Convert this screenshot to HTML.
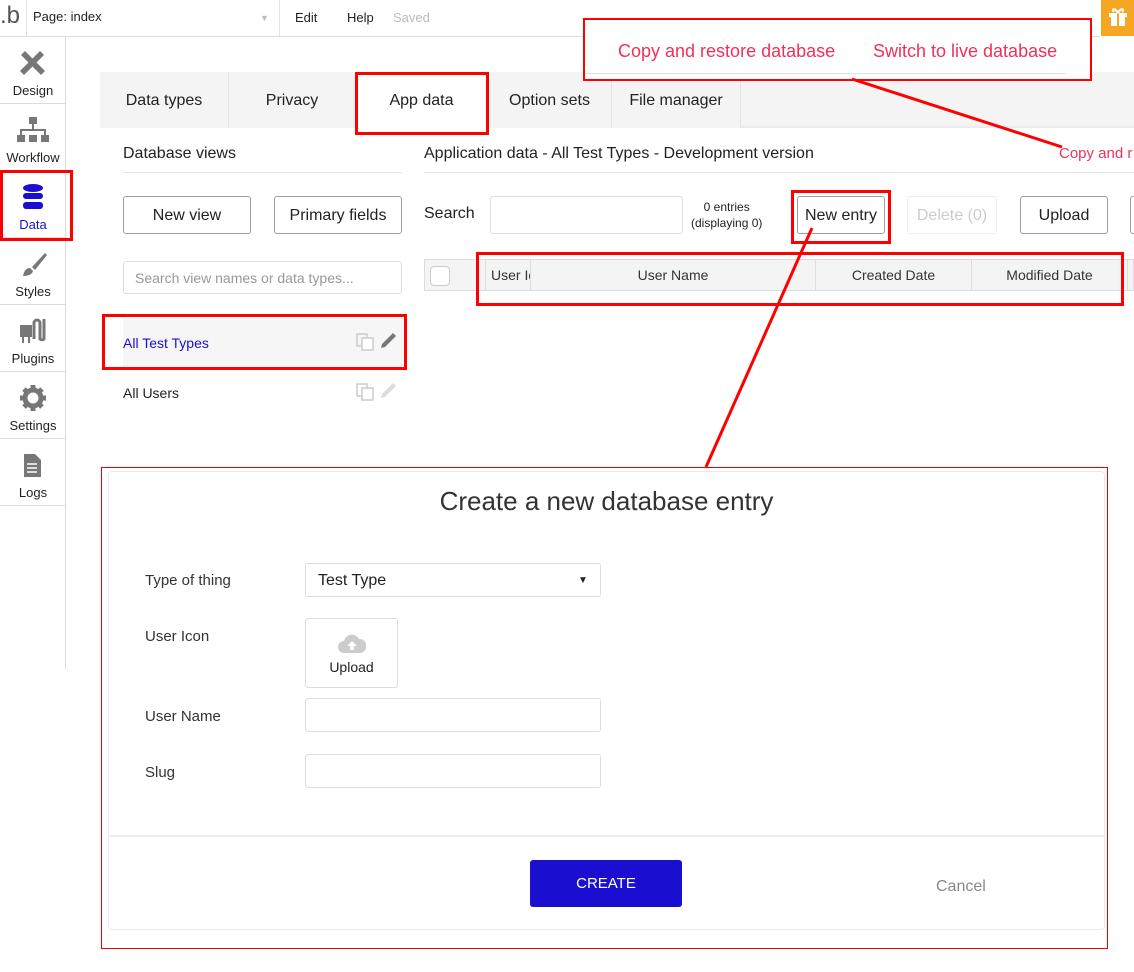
<!DOCTYPE html>
<html><head><style>
*{box-sizing:border-box;margin:0;padding:0}
body{width:1134px;height:970px;overflow:hidden;background:#fff;font-family:"Liberation Sans",sans-serif;color:#222;position:relative;font-size:15px}
.a{position:absolute}
.t{position:absolute;white-space:nowrap}
.btn{position:absolute;border:1px solid #9aa0a6;border-radius:3px;background:#fff;text-align:center;font-size:16px}
.red{position:absolute;border:3px solid #f00}
.side .t{font-size:13px;width:66px;text-align:center;left:0}
.sep{position:absolute;left:0;width:65px;height:1px;background:#ddd}
.tab{position:absolute;top:72px;height:56px;background:#f4f4f4;border-right:1px solid #e4e4e4;font-size:16px;text-align:center;line-height:58px}
.inp{position:absolute;border:1px solid #ddd;border-radius:3px;background:#fff}
.lbl{position:absolute;font-size:15px;color:#333}
.th{position:absolute;top:260px;height:30px;border-left:1px solid #ddd;font-size:14px;text-align:center;line-height:31px;color:#333}
</style></head><body>
<div class="a" style="left:0;top:36px;width:1100px;height:1px;background:#ddd"></div>
<div class="a" style="left:26px;top:0;width:1px;height:36px;background:#e4e4e4"></div>
<div class="t" style="left:0;top:2px;font-size:24px;color:#555">.b</div>
<div class="t" style="left:33px;top:9px;font-size:13px">Page: index</div>
<div class="t" style="left:260px;top:13px;font-size:9px;color:#bbb">▼</div>
<div class="a" style="left:279px;top:0;width:1px;height:36px;background:#e4e4e4"></div>
<div class="t" style="left:295px;top:10px;font-size:13px">Edit</div>
<div class="t" style="left:347px;top:10px;font-size:13px">Help</div>
<div class="t" style="left:393px;top:10px;font-size:13px;color:#bbb">Saved</div>
<div class="a" style="left:1101px;top:0;width:33px;height:36px;background:#f5a623"></div>
<svg class="a" style="left:1106px;top:4px" width="24" height="24" viewBox="0 0 24 24"><rect x="3" y="9" width="18" height="4" fill="#fff"/><rect x="5" y="13" width="14" height="9" fill="#fff"/><rect x="11" y="9" width="2" height="13" fill="#f5a623"/><path d="M12 9C9 3 5 5 8 8M12 9c3-6 7-4 4-1" stroke="#fff" stroke-width="2" fill="none"/></svg>
<div class="a side" style="left:0;top:37px;width:66px;height:632px;border-right:1px solid #ddd">
<svg class="a" style="left:18px;top:12px" width="28" height="28" viewBox="0 0 28 28"><path d="M3 6l4-4 20 20-4 4z" fill="#777"/><path d="M22 2l4 4L6 26l-4-4z" fill="#777"/></svg>
<div class="t" style="top:46px">Design</div>
<div class="sep" style="top:66px"></div>
<svg class="a" style="left:17px;top:79px" width="32" height="28" viewBox="0 0 32 28"><rect x="12" y="1" width="8" height="7" fill="#777"/><rect x="15" y="8" width="2" height="6" fill="#777"/><rect x="3" y="13" width="26" height="2" fill="#777"/><rect x="3" y="13" width="2" height="7" fill="#777"/><rect x="27" y="13" width="2" height="7" fill="#777"/><rect x="0" y="19" width="8" height="7" fill="#777"/><rect x="12" y="19" width="8" height="7" fill="#777"/><rect x="24" y="19" width="8" height="7" fill="#777"/></svg>
<div class="t" style="top:113px">Workflow</div>
<div class="sep" style="top:133px"></div>
<svg class="a" style="left:22px;top:147px" width="22" height="26" viewBox="0 0 22 26"><ellipse cx="11" cy="4" rx="10" ry="4" fill="#1a0fd1"/><rect x="1" y="9" width="20" height="6" rx="3" fill="#1a0fd1"/><rect x="1" y="18" width="20" height="7" rx="3" fill="#1a0fd1"/></svg>
<div class="t" style="top:180px;color:#1a0fd1">Data</div>
<div class="sep" style="top:200px"></div>
<svg class="a" style="left:20px;top:214px" width="28" height="28" viewBox="0 0 28 28"><path d="M25 2L12 16l3 3L27 4z" fill="#777"/><path d="M10 17c-4 0-6 3-7 8 4 0 9-1 10-5z" fill="#777"/></svg>
<div class="t" style="top:247px">Styles</div>
<div class="sep" style="top:267px"></div>
<svg class="a" style="left:18px;top:280px" width="28" height="28" viewBox="0 0 28 28"><rect x="2" y="8" width="12" height="12" fill="#777"/><rect x="4" y="20" width="2" height="6" fill="#777"/><rect x="10" y="20" width="2" height="6" fill="#777"/><path d="M16 22V6a3 3 0 016 0v16a3 3 0 004 0V2" stroke="#777" stroke-width="3" fill="none"/></svg>
<div class="t" style="top:314px">Plugins</div>
<div class="sep" style="top:334px"></div>
<svg class="a" style="left:20px;top:348px" width="26" height="26" viewBox="0 0 26 26"><circle cx="13" cy="13" r="8" fill="none" stroke="#777" stroke-width="5"/><g stroke="#777" stroke-width="5"><path d="M13 0v6M13 20v6M0 13h6M20 13h6M4 4l4 4M18 18l4 4M22 4l-4 4M4 22l4-4"/></g></svg>
<div class="t" style="top:381px">Settings</div>
<div class="sep" style="top:401px"></div>
<svg class="a" style="left:22px;top:416px" width="20" height="26" viewBox="0 0 20 26"><path d="M2 1h11l6 6v17H2z" fill="#777"/><path d="M5 11h10M5 15h10M5 19h10" stroke="#fff" stroke-width="1.5"/></svg>
<div class="t" style="top:448px">Logs</div>
<div class="sep" style="top:468px"></div>
</div>
<div class="red" style="left:0;top:170px;width:73px;height:71px"></div>
<div class="a" style="left:100px;top:72px;width:1034px;height:900px;background:#fff"></div>
<div class="a" style="left:100px;top:72px;width:1034px;height:56px;background:#f4f4f4;border-bottom:2px solid #ebebeb"></div>
<div class="tab" style="left:100px;width:129px">Data types</div>
<div class="tab" style="left:229px;width:127px">Privacy</div>
<div class="tab" style="left:356px;width:132px;background:#fff">App data</div>
<div class="tab" style="left:488px;width:124px">Option sets</div>
<div class="tab" style="left:612px;width:129px">File manager</div>
<div class="red" style="left:355px;top:72px;width:134px;height:63px"></div>
<div class="t" style="left:123px;top:145px;font-size:16px">Database views</div>
<div class="a" style="left:123px;top:172px;width:279px;height:1px;background:#e4e4e4"></div>
<div class="btn" style="left:123px;top:196px;width:128px;height:38px;line-height:37px">New view</div>
<div class="btn" style="left:274px;top:196px;width:128px;height:38px;line-height:37px">Primary fields</div>
<div class="inp" style="left:123px;top:261px;width:279px;height:33px"></div>
<div class="t" style="left:135px;top:270px;font-size:14px;color:#999">Search view names or data types...</div>
<div class="a" style="left:123px;top:318px;width:280px;height:50px;background:#f6f6f6"></div>
<div class="t" style="left:123px;top:335px;font-size:14px;color:#1a0fd1">All Test Types</div>
<div class="t" style="left:123px;top:385px;font-size:14px">All Users</div>
<svg class="a" style="left:356px;top:332px" width="42" height="20" viewBox="0 0 42 20"><rect x="1" y="2" width="10" height="12" fill="none" stroke="#ccc" stroke-width="1.5"/><rect x="6" y="6" width="11" height="12" fill="#fff" stroke="#ccc" stroke-width="1.5"/><path d="M25 16l1-4 11-11 3 3-11 11z" fill="#777"/></svg>
<svg class="a" style="left:356px;top:382px" width="42" height="20" viewBox="0 0 42 20"><rect x="1" y="2" width="10" height="12" fill="none" stroke="#ccc" stroke-width="1.5"/><rect x="6" y="6" width="11" height="12" fill="#fff" stroke="#ccc" stroke-width="1.5"/><path d="M25 16l1-4 11-11 3 3-11 11z" fill="#ddd"/></svg>
<div class="red" style="left:102px;top:314px;width:305px;height:56px"></div>
<div class="t" style="left:424px;top:145px;font-size:16px">Application data - All Test Types - Development version</div>
<div class="a" style="left:424px;top:172px;width:710px;height:1px;background:#e4e4e4"></div>
<div class="t" style="left:1059px;top:145px;font-size:15px;color:#f0305a">Copy and r</div>
<div class="t" style="left:424px;top:205px;font-size:16px">Search</div>
<div class="inp" style="left:490px;top:196px;width:193px;height:38px"></div>
<div class="t" style="left:691px;top:199px;font-size:12px;text-align:center;line-height:16px">0 entries<br>(displaying 0)</div>
<div class="btn" style="left:797px;top:196px;width:88px;height:38px;line-height:37px">New entry</div>
<div class="red" style="left:791px;top:190px;width:100px;height:54px"></div>
<div class="btn" style="left:907px;top:196px;width:90px;height:38px;line-height:37px;border-color:#eee;color:#ccc">Delete (0)</div>
<div class="btn" style="left:1020px;top:196px;width:88px;height:38px;line-height:37px">Upload</div>
<div class="btn" style="left:1130px;top:196px;width:20px;height:38px"></div>
<div class="a" style="left:424px;top:259px;width:710px;height:32px;background:#f4f4f4;border:1px solid #ddd"></div>
<div class="a" style="left:430px;top:266px;width:20px;height:20px;border:1px solid #ccc;border-radius:4px;background:#fff"></div>
<div class="th" style="left:485px;width:45px;text-align:left;padding-left:5px;overflow:hidden">User&nbsp;Ic</div>
<div class="th" style="left:530px;width:285px">User Name</div>
<div class="th" style="left:815px;width:156px">Created Date</div>
<div class="th" style="left:971px;width:156px">Modified Date</div>
<div class="th" style="left:1127px;width:7px"></div>
<div class="red" style="left:476px;top:252px;width:648px;height:54px"></div>
<div class="a" style="left:583px;top:18px;width:509px;height:63px;background:#fff;border:2px solid #f00"></div>
<div class="t" style="left:618px;top:41px;font-size:18px;color:#f0305a">Copy and restore database</div>
<div class="t" style="left:873px;top:41px;font-size:18px;color:#f0305a">Switch to live database</div>
<div class="a" style="left:585px;top:73px;width:481px;height:1px;background:#e4e4e4"></div>
<div class="a" style="left:101px;top:467px;width:1007px;height:482px;background:#fff;border:1px solid #e00"></div>
<div class="a" style="left:108px;top:471px;width:997px;height:459px;border:1px solid #eaeaea;border-radius:4px;background:#fff"></div>
<div class="t" style="left:108px;width:997px;text-align:center;top:486px;font-size:26px;color:#333">Create a new database entry</div>
<div class="lbl" style="left:145px;top:572px">Type of thing</div>
<div class="inp" style="left:305px;top:563px;width:296px;height:34px"></div>
<div class="t" style="left:318px;top:572px;font-size:16px">Test Type</div>
<div class="t" style="left:578px;top:575px;font-size:10px">▼</div>
<div class="lbl" style="left:145px;top:628px">User Icon</div>
<div class="inp" style="left:305px;top:618px;width:93px;height:70px"></div>
<svg class="a" style="left:338px;top:633px" width="28" height="22" viewBox="0 0 28 22"><path d="M6 20a6 6 0 010-12 8 8 0 0115-2 6 6 0 011 14z" fill="#ccc"/><path d="M14 8l-5 5h3v4h4v-4h3z" fill="#fff"/></svg>
<div class="t" style="left:305px;width:93px;text-align:center;top:659px;font-size:14px">Upload</div>
<div class="lbl" style="left:145px;top:708px">User Name</div>
<div class="inp" style="left:305px;top:698px;width:296px;height:34px"></div>
<div class="lbl" style="left:145px;top:764px">Slug</div>
<div class="inp" style="left:305px;top:754px;width:296px;height:34px"></div>
<div class="a" style="left:109px;top:835px;width:995px;height:2px;background:#eee"></div>
<div class="a" style="left:530px;top:860px;width:152px;height:47px;background:#1a0fd1;border-radius:3px;color:#fff;text-align:center;line-height:47px;font-size:15px">CREATE</div>
<div class="t" style="left:936px;top:878px;font-size:16px;color:#888">Cancel</div>
<svg class="a" style="left:0;top:0" width="1134" height="970"><path d="M852 79L1062 147" stroke="#f00" stroke-width="3"/><path d="M812 228L706 467" stroke="#f00" stroke-width="3"/></svg>
</body></html>
